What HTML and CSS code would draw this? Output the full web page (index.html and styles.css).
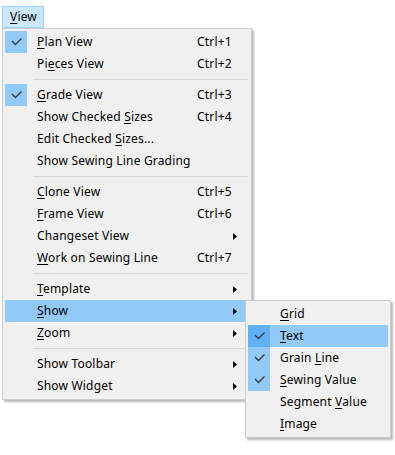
FILE: index.html
```html
<!DOCTYPE html>
<html>
<head>
<meta charset="utf-8">
<link rel="stylesheet" href="styles.css">
</head>
<body>
<div class="menubar">
  <div class="menubar-item"><u>V</u>iew</div>
</div>

<div class="menu main-menu">
  <div class="item checked"><span class="check"><svg width="22" height="22" viewBox="0 0 22 22"><polyline points="7,10 10.5,13.5 16.5,7.5" /></svg></span><span class="label"><u>P</u>lan View</span><span class="sc">Ctrl+1</span><span class="arr"></span></div>
  <div class="item"><span class="check"></span><span class="label">Pi<u>e</u>ces View</span><span class="sc">Ctrl+2</span><span class="arr"></span></div>
  <div class="sep"></div>
  <div class="item checked"><span class="check"><svg width="22" height="22" viewBox="0 0 22 22"><polyline points="7,10 10.5,13.5 16.5,7.5" /></svg></span><span class="label"><u>G</u>rade View</span><span class="sc">Ctrl+3</span><span class="arr"></span></div>
  <div class="item"><span class="check"></span><span class="label">Show Checked <u>S</u>izes</span><span class="sc">Ctrl+4</span><span class="arr"></span></div>
  <div class="item"><span class="check"></span><span class="label">Edit Checked <u>S</u>izes...</span><span class="sc"></span><span class="arr"></span></div>
  <div class="item"><span class="check"></span><span class="label">Show Sewing Line Grading</span><span class="sc"></span><span class="arr"></span></div>
  <div class="sep"></div>
  <div class="item"><span class="check"></span><span class="label"><u>C</u>lone View</span><span class="sc">Ctrl+5</span><span class="arr"></span></div>
  <div class="item"><span class="check"></span><span class="label"><u>F</u>rame View</span><span class="sc">Ctrl+6</span><span class="arr"></span></div>
  <div class="item"><span class="check"></span><span class="label">Changeset View</span><span class="sc"></span><span class="arr"><svg width="4" height="7" viewBox="0 0 4 7"><polygon points="0,0 4,3.5 0,7" /></svg></span></div>
  <div class="item"><span class="check"></span><span class="label"><u>W</u>ork on Sewing Line</span><span class="sc">Ctrl+7</span><span class="arr"></span></div>
  <div class="sep"></div>
  <div class="item"><span class="check"></span><span class="label"><u>T</u>emplate</span><span class="sc"></span><span class="arr"><svg width="4" height="7" viewBox="0 0 4 7"><polygon points="0,0 4,3.5 0,7" /></svg></span></div>
  <div class="item active"><span class="check"></span><span class="label"><u>S</u>how</span><span class="sc"></span><span class="arr"><svg width="4" height="7" viewBox="0 0 4 7"><polygon points="0,0 4,3.5 0,7" /></svg></span></div>
  <div class="item"><span class="check"></span><span class="label"><u>Z</u>oom</span><span class="sc"></span><span class="arr"><svg width="4" height="7" viewBox="0 0 4 7"><polygon points="0,0 4,3.5 0,7" /></svg></span></div>
  <div class="sep"></div>
  <div class="item"><span class="check"></span><span class="label">Show Toolbar</span><span class="sc"></span><span class="arr"><svg width="4" height="7" viewBox="0 0 4 7"><polygon points="0,0 4,3.5 0,7" /></svg></span></div>
  <div class="item"><span class="check"></span><span class="label">Show Widget</span><span class="sc"></span><span class="arr"><svg width="4" height="7" viewBox="0 0 4 7"><polygon points="0,0 4,3.5 0,7" /></svg></span></div>
</div>

<div class="menu sub-menu">
  <div class="item"><span class="check"></span><span class="label"><u>G</u>rid</span></div>
  <div class="item checked active"><span class="check"><svg width="22" height="22" viewBox="0 0 22 22"><polyline points="7,10 10.5,13.5 16.5,7.5" /></svg></span><span class="label"><u>T</u>ext</span></div>
  <div class="item checked"><span class="check"><svg width="22" height="22" viewBox="0 0 22 22"><polyline points="7,10 10.5,13.5 16.5,7.5" /></svg></span><span class="label">Grain <u>L</u>ine</span></div>
  <div class="item checked"><span class="check"><svg width="22" height="22" viewBox="0 0 22 22"><polyline points="7,10 10.5,13.5 16.5,7.5" /></svg></span><span class="label"><u>S</u>ewing Value</span></div>
  <div class="item"><span class="check"></span><span class="label">Segment <u>V</u>alue</span></div>
  <div class="item"><span class="check"></span><span class="label"><u>I</u>mage</span></div>
</div>
</body>
</html>
```

FILE: styles.css
```css
html, body {
  margin: 0;
  padding: 0;
  background: #ffffff;
}

body {
  font-family: "Noto Sans", "Open Sans", sans-serif;
  font-size: 12px;
  letter-spacing: 0.18px;
  color: #000;
  width: 395px;
  height: 455px;
  position: relative;
  overflow: hidden;
}

u {
  text-decoration: underline;
  text-underline-offset: 2px;
  text-decoration-thickness: 1px;
}

.menubar {
  padding: 6px 0 0 2px;
  display: flex;
}

.menubar-item {
  box-sizing: border-box;
  width: 42px;
  height: 22px;
  line-height: 20px;
  padding-left: 7px;
  background: #cce8ff;
  border: 1px solid #99d1ff;
}

.menu {
  position: absolute;
  box-sizing: border-box;
  background: #f0f0f0;
  border: 1px solid #cccccc;
  padding: 2px;
  box-shadow: 2px 2px 2px rgba(0, 0, 0, 0.28);
}

.main-menu {
  left: 2px;
  top: 28px;
  width: 250px;
}

.sub-menu {
  left: 245px;
  top: 300px;
  width: 146px;
}

.item {
  display: flex;
  align-items: center;
  height: 22px;
  line-height: 22px;
  white-space: nowrap;
}

.check {
  width: 22px;
  height: 22px;
  flex: none;
  display: flex;
}

.check svg polyline {
  fill: none;
  stroke: #3a3a3a;
  stroke-width: 1.4;
}

.checked .check {
  background: #91c9f7;
}

.item.active {
  background: #91c9f7;
}

.item.active.checked .check {
  background: #5fb0f6;
}

.label {
  padding-left: 10px;
  flex: 1;
}

.sc {
  width: 36px;
  flex: none;
}

.arr {
  width: 16px;
  flex: none;
  display: flex;
  align-items: center;
}

.arr svg polygon {
  fill: #000;
}

.sep {
  height: 1px;
  background: #d7d7d7;
  margin: 4px 1px 4px 28px;
}
```
